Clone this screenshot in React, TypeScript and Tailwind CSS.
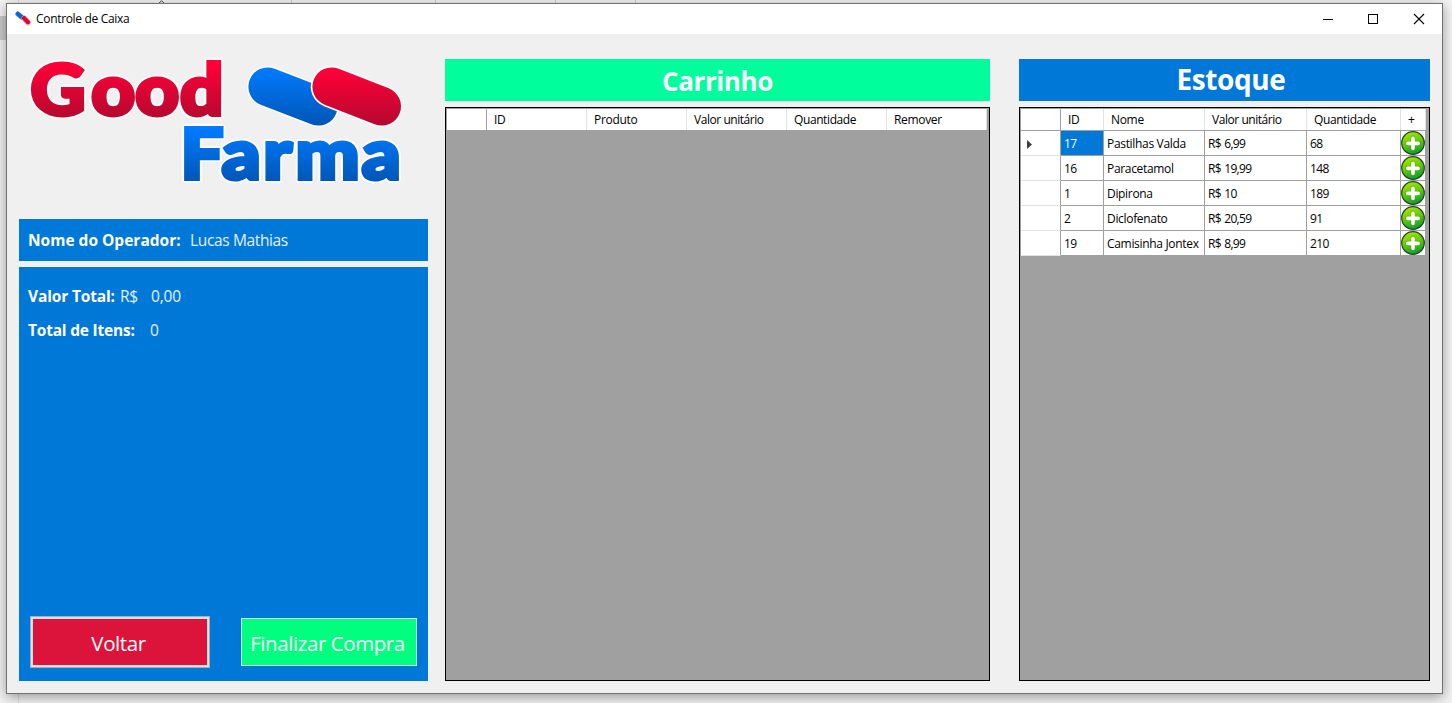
const products = [
  { id: "17", name: "Pastilhas Valda", price: "R$ 6,99", qty: "68" },
  { id: "16", name: "Paracetamol", price: "R$ 19,99", qty: "148" },
  { id: "1", name: "Dipirona", price: "R$ 10", qty: "189" },
  { id: "2", name: "Diclofenato", price: "R$ 20,59", qty: "91" },
  { id: "19", name: "Camisinha Jontex", price: "R$ 8,99", qty: "210" },
];

function AppIcon() {
  return (
    <svg className="h-4 w-4 shrink-0" viewBox="0 0 16 16">
      <path d="M2.8 3 L6.8 6.4" stroke="#9fb4c8" strokeWidth="5" strokeLinecap="round" />
      <path d="M9.2 7.4 L13 11.6" stroke="#c9a0a8" strokeWidth="5.6" strokeLinecap="round" />
      <path d="M2.8 2.8 L6.8 6.2" stroke="#0a68d8" strokeWidth="4.2" strokeLinecap="round" />
      <path d="M9.2 7.2 L13 11.2" stroke="#ffffff" strokeWidth="5" strokeLinecap="round" />
      <path d="M9.2 7.2 L13 11.2" stroke="#e4002f" strokeWidth="4.4" strokeLinecap="round" />
    </svg>
  );
}

function Wordmark({ text, x, y, paint }: { text: string; x: string; y: number; paint: string }) {
  return (
    <>
      <text x={x} y={y} fill="#ffffff" stroke="#ffffff" strokeWidth="7.5" strokeLinejoin="round" aria-hidden="true">
        {text}
      </text>
      <text x={x} y={y} fill={paint} stroke={paint} strokeWidth="4">
        {text}
      </text>
    </>
  );
}

function Logo() {
  return (
    <svg className="block h-[164px] w-[409px]" viewBox="19 35 409 164" fill="none">
      <defs>
        <linearGradient id="red" gradientUnits="userSpaceOnUse" x1="0" y1="64" x2="0" y2="120">
          <stop offset="0" stopColor="#ff0037" />
          <stop offset="1" stopColor="#b3092f" />
        </linearGradient>
        <linearGradient id="pillRed" gradientUnits="userSpaceOnUse" x1="0" y1="70" x2="0" y2="126">
          <stop offset="0" stopColor="#ff0037" />
          <stop offset="1" stopColor="#b3092f" />
        </linearGradient>
        <linearGradient id="pillBlue" gradientUnits="userSpaceOnUse" x1="0" y1="68" x2="0" y2="126">
          <stop offset="0" stopColor="#007bff" />
          <stop offset="1" stopColor="#0055b5" />
        </linearGradient>
        <linearGradient id="blue" gradientUnits="userSpaceOnUse" x1="0" y1="128" x2="0" y2="183">
          <stop offset="0" stopColor="#007bff" />
          <stop offset="1" stopColor="#0055b5" />
        </linearGradient>
      </defs>
      <g className="font-['Lato',sans-serif] text-[71px] font-black tracking-normal" transform="scale(1.07 1)">
        <Wordmark text="Good" x="28.6 85.2 126.4 168.2" y={114.7} paint="url(#red)" />
        <Wordmark text="Farma" x="168.8 207.2 246 276.2 338" y={179} paint="url(#blue)" />
      </g>
      <g strokeLinecap="round">
        <path d="M267.7 86.7 L318.3 106.3" stroke="#ffffff" strokeWidth="41.6" />
        <path d="M267.7 86.7 L318.3 106.3" stroke="url(#pillBlue)" strokeWidth="38.6" />
        <path d="M331.7 86.7 L381.7 106.3" stroke="#ffffff" strokeWidth="42" />
        <path d="M331.7 86.7 L381.7 106.3" stroke="url(#pillRed)" strokeWidth="38.6" />
      </g>
    </svg>
  );
}

function PlusIcon() {
  return (
    <svg className="block h-6 w-6" viewBox="0 0 24 24">
      <defs>
        <linearGradient id="plusFill" x1="0.3" y1="0" x2="0.65" y2="1">
          <stop offset="0" stopColor="#a8e800" />
          <stop offset="0.5" stopColor="#62c808" />
          <stop offset="1" stopColor="#059a35" />
        </linearGradient>
      </defs>
      <circle cx="12" cy="12" r="11.3" fill="url(#plusFill)" stroke="#24422c" strokeWidth="1.2" />
      <path d="M12 6.7 V17.7 M6.5 12.3 H17.5" stroke="#3c9a10" strokeWidth="5" strokeLinecap="round" opacity="0.35" />
      <path d="M12 7.2 V17.4 M6.8 12.4 H17.2" stroke="#ffffff" strokeWidth="3.6" strokeLinecap="round" />
    </svg>
  );
}

function HeaderCell({ label, className }: { label: string; className: string }) {
  return (
    <div className={`flex h-[21px] items-center border-r border-[#e2e2e2] bg-white pl-[7px] ${className}`}>
      {label}
    </div>
  );
}

function StockRow({ item, selected }: { item: (typeof products)[number]; selected: boolean }) {
  return (
    <div className="flex h-[25px]">
      <div className="flex w-10 items-center border-r border-r-[#a0a0a0] border-b border-b-[#e2e2e2] bg-white pl-1.5">
        {selected && (
          <svg className="mt-0.5 h-[9px] w-[5px]" viewBox="0 0 5 9">
            <path d="M0 0 L5 4.5 L0 9 Z" fill="#404040" />
          </svg>
        )}
      </div>
      <div
        className={`flex w-[43px] items-center border-r border-b border-[#a0a0a0] pt-0.5 pl-[3px] tracking-[-0.55px] ${
          selected ? "bg-[#0078d7] text-white" : "bg-white"
        }`}
      >
        {item.id}
      </div>
      <div className="flex w-[101px] items-center border-r border-b border-[#a0a0a0] bg-white pt-0.5 pl-[3px]">
        {item.name}
      </div>
      <div className="flex w-[102px] items-center border-r border-b border-[#a0a0a0] bg-white pt-0.5 pl-[3px] tracking-[-0.7px] [word-spacing:1px]">
        {item.price}
      </div>
      <div className="flex w-[94px] items-center border-r border-b border-[#a0a0a0] bg-white pt-0.5 pl-[3px] tracking-[-0.65px]">
        {item.qty}
      </div>
      <div className="w-[25px] border-r border-b border-[#a0a0a0] bg-white">
        <PlusIcon />
      </div>
    </div>
  );
}

function TitleBar() {
  return (
    <header className="flex h-[30px] items-center bg-white pr-[17px] pl-2">
      <AppIcon />
      <span className="ml-[5px] pb-px text-black">Controle de Caixa</span>
      <svg className="ml-auto h-3 w-[103px]" viewBox="0 0 103 12" fill="none" stroke="#000000">
        <path d="M1 6.5 H11" />
        <rect x="46.5" y="1.5" width="9" height="9" />
        <path d="M92 1 L102 11 M102 1 L92 11" strokeWidth="1.1" />
      </svg>
    </header>
  );
}

export default function App() {
  return (
    <div className="relative flex h-[703px] w-[1452px] overflow-hidden bg-[#f3f3f3] pt-[3px] pl-1.5 font-['Open_Sans',sans-serif] text-[12px] leading-4 tracking-[-0.32px] whitespace-nowrap text-black">
      <div className="absolute top-4 left-0 h-6 w-1.5 bg-[#cbcbcb]" />
      <div className="absolute top-0 left-[18px] h-[703px] w-px bg-[#dcdcdc]" />
      <div className="absolute top-0 left-[291px] h-[3px] w-px bg-[#cccccc]" />
      <div className="absolute top-0 left-[435px] h-[3px] w-px bg-[#cccccc]" />
      <div className="absolute top-0 left-[555px] h-[3px] w-px bg-[#cccccc]" />
      <div className="absolute top-0 left-[635px] h-[3px] w-px bg-[#cccccc]" />
      <svg className="absolute top-0 left-[158px] h-1 w-[7px]" viewBox="0 0 7 4" fill="none">
        <path d="M0.5 3.7 L3.5 0.7 L6.5 3.7" stroke="#444444" />
      </svg>

      <div className="relative flex h-[691px] w-[1437px] flex-col border border-[#707070] bg-[#f0f0f0] shadow-[0_3px_12px_rgba(0,0,0,0.38)]">
        <TitleBar />
        <main className="flex flex-1 pl-3">
          <section className="flex w-[409px] flex-col pt-px">
            <Logo />
            <div className="mt-5 flex h-[42px] items-center bg-[#0078d7] pl-[9px] text-[15.5px] text-white">
              <b className="w-[162px] tracking-[0px]">Nome do Operador:</b>
              <span className="tracking-[-0.36px] text-white/90">Lucas Mathias</span>
            </div>
            <div className="mt-1.5 flex h-[414px] flex-col bg-[#0078d7] text-[15.5px] leading-5 text-white">
              <div className="mt-[19px] flex pl-[9px]">
                <b className="w-[92px] tracking-[-0.15px]">Valor Total:</b>
                <span className="w-[31px] text-white/90">R$</span>
                <span className="tracking-[-0.2px] text-white/90">0,00</span>
              </div>
              <div className="mt-3.5 flex pl-[9px]">
                <b className="w-[122px] tracking-[-0.2px]">Total de Itens:</b>
                <span className="text-white/90">0</span>
              </div>
              <div className="mt-auto mb-[13px] flex items-center gap-[31px] pl-[11px] text-[20.5px] tracking-[-0.42px]">
                <button className="h-[52px] w-[180px] border border-[#adadad] bg-[#e1e1e1] p-0.5">
                  <span className="flex h-full items-center justify-center bg-[#dc143c] pt-0.5 pr-[3px]">Voltar</span>
                </button>
                <button className="flex h-12 w-44 items-center justify-center border border-[#d5f0e2] bg-[#00ff7f] pt-0.5 pr-[3px]">
                  Finalizar Compra
                </button>
              </div>
            </div>
          </section>

          <section className="ml-[17px] w-[545px] pt-[25px]">
            <h2 className="flex h-[42px] items-center justify-center bg-[#00ff9c] pt-0.5 text-[26px] font-bold tracking-[-0.4px] text-white">
              Carrinho
            </h2>
            <div className="mt-1.5 h-[574px] border border-black bg-[#a0a0a0] pt-px pl-px">
              <div className="flex h-[21px] w-[540px] bg-white">
                <div className="w-10 border-r border-[#a0a0a0]" />
                <HeaderCell label="ID" className="w-[100px]" />
                <HeaderCell label="Produto" className="w-[100px]" />
                <HeaderCell label="Valor unitário" className="w-[100px] tracking-[-0.45px]" />
                <HeaderCell label="Quantidade" className="w-[100px] tracking-[-0.4px]" />
                <HeaderCell label="Remover" className="w-[100px]" />
              </div>
            </div>
          </section>

          <section className="ml-[29px] w-[411px] pt-[25px]">
            <h2 className="flex h-[42px] items-center justify-center bg-[#0078d7] pb-0.5 pl-[13px] text-[28px] font-bold tracking-[-0.42px] text-white">
              Estoque
            </h2>
            <div className="mt-1.5 h-[574px] border border-black bg-[#a0a0a0] pt-px pl-px">
              <div className="mb-px flex h-[21px] w-[405px] bg-white">
                <div className="w-10 border-r border-[#a0a0a0]" />
                <HeaderCell label="ID" className="w-[43px]" />
                <HeaderCell label="Nome" className="w-[101px]" />
                <HeaderCell label="Valor unitário" className="w-[102px] tracking-[-0.45px]" />
                <HeaderCell label="Quantidade" className="w-[94px] tracking-[-0.4px]" />
                <HeaderCell label="+" className="w-[25px]" />
              </div>
              {products.map((item, i) => (
                <StockRow key={item.id} item={item} selected={i === 0} />
              ))}
            </div>
          </section>
        </main>
      </div>
    </div>
  );
}
